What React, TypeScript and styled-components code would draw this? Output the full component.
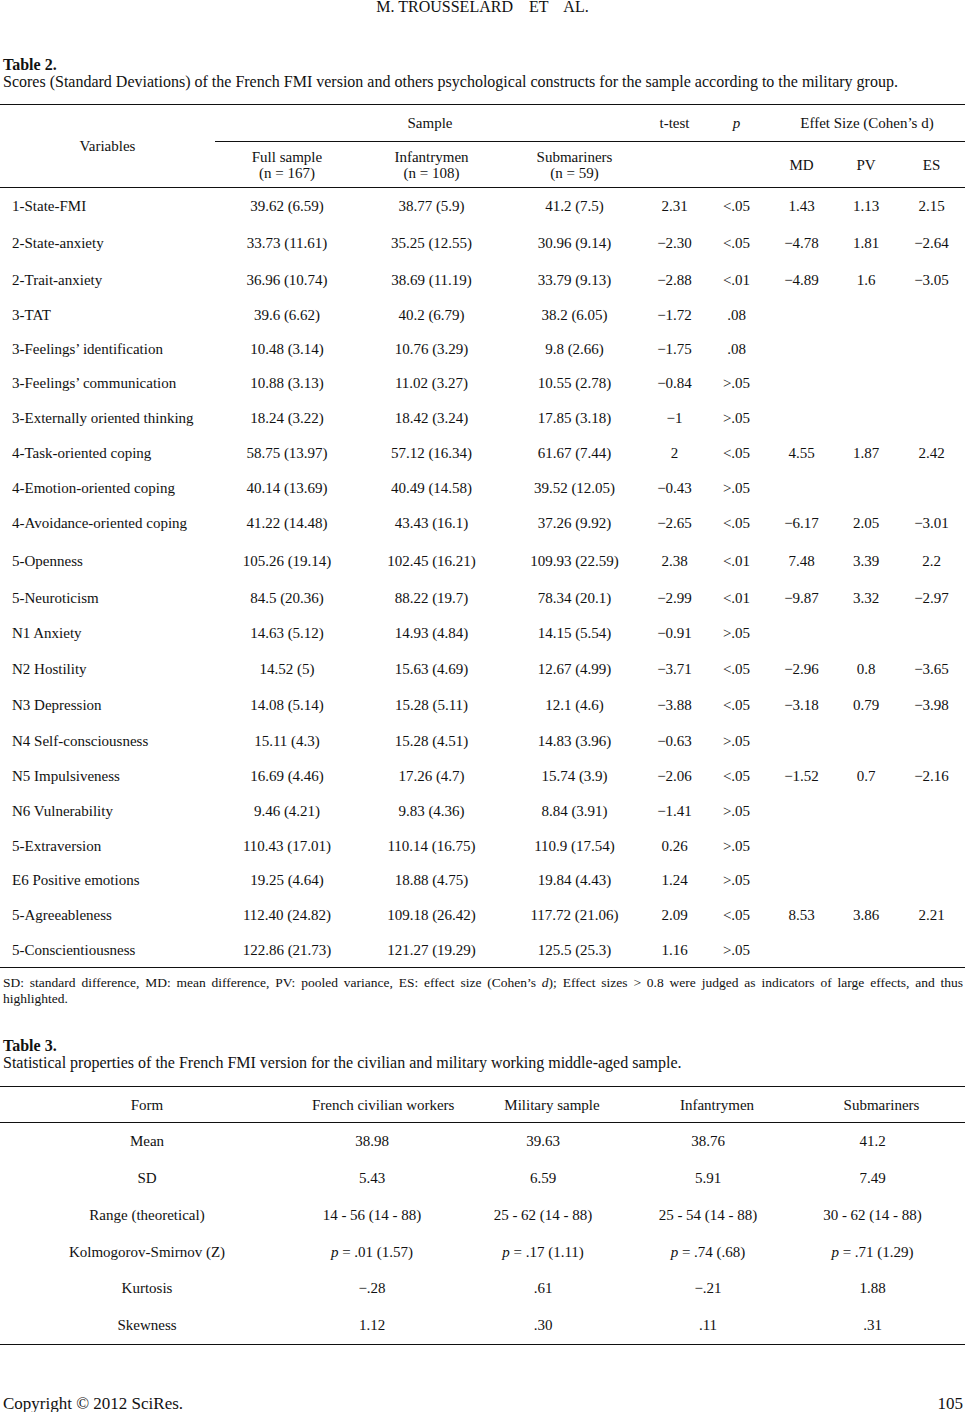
import React from "react";
import styled, { createGlobalStyle } from "styled-components";

const Global = createGlobalStyle`
  html, body { margin: 0; padding: 0; background: #fff; }
  body { font-family: "Liberation Serif", "Times New Roman", serif; color: #111; }
`;

const Page = styled.div`
  width: 965px;
  display: flex;
  flex-direction: column;
`;

const RunningHead = styled.div`
  font-size: 16px;
  line-height: 14px;
  height: 14px;
  text-align: center;
  white-space: pre;
`;

const Caption = styled.div<{ $mt: number }>`
  margin-top: ${(p) => p.$mt}px;
  padding-left: 3px;
  font-size: 16px;
  line-height: 17px;
`;

const CaptionTitle = styled.div`
  font-weight: bold;
`;

const Table = styled.table<{ $mt: number }>`
  margin-top: ${(p) => p.$mt}px;
  width: 965px;
  table-layout: fixed;
  border-collapse: collapse;
  border-top: 1px solid #111;
  border-bottom: 1px solid #111;
  font-size: 15px;
  line-height: 16px;
`;

const Row = styled.tr<{ $h: number; $rule?: boolean }>`
  height: ${(p) => p.$h}px;
  ${(p) => (p.$rule ? "border-bottom: 1px solid #111;" : "")}
`;

const HeadCell = styled.th<{ $rule?: boolean; $shift?: number }>`
  font-weight: normal;
  text-align: center;
  vertical-align: middle;
  white-space: nowrap;
  padding: 0 0 0 ${(p) => p.$shift ?? 0}px;
  ${(p) => (p.$rule ? "border-bottom: 1px solid #111;" : "")}
`;

const Cell = styled.td<{ $left?: boolean }>`
  text-align: ${(p) => (p.$left ? "left" : "center")};
  vertical-align: middle;
  padding: 0 0 0 ${(p) => (p.$left ? 12 : 0)}px;
  white-space: nowrap;
`;

const Footnote = styled.p`
  margin: 7px 0 0;
  padding: 0 2px 0 3px;
  font-size: 13.5px;
  line-height: 16px;
  text-align: justify;
`;

const Footer = styled.div`
  margin-top: 50px;
  padding: 0 2px 0 3px;
  display: flex;
  justify-content: space-between;
  font-size: 17px;
  line-height: 17px;
`;

const M = "\u2212";

type R2 = [string, string, string, string, string, string, string?, string?, string?];

const t2: { h: number; r: R2 }[] = [
  { h: 37, r: ["1-State-FMI", "39.62 (6.59)", "38.77 (5.9)", "41.2 (7.5)", "2.31", "<.05", "1.43", "1.13", "2.15"] },
  { h: 37, r: ["2-State-anxiety", "33.73 (11.61)", "35.25 (12.55)", "30.96 (9.14)", M + "2.30", "<.05", M + "4.78", "1.81", M + "2.64"] },
  { h: 36, r: ["2-Trait-anxiety", "36.96 (10.74)", "38.69 (11.19)", "33.79 (9.13)", M + "2.88", "<.01", M + "4.89", "1.6", M + "3.05"] },
  { h: 34, r: ["3-TAT", "39.6 (6.62)", "40.2 (6.79)", "38.2 (6.05)", M + "1.72", ".08"] },
  { h: 34, r: ["3-Feelings\u2019 identification", "10.48 (3.14)", "10.76 (3.29)", "9.8 (2.66)", M + "1.75", ".08"] },
  { h: 35, r: ["3-Feelings\u2019 communication", "10.88 (3.13)", "11.02 (3.27)", "10.55 (2.78)", M + "0.84", ">.05"] },
  { h: 35, r: ["3-Externally oriented thinking", "18.24 (3.22)", "18.42 (3.24)", "17.85 (3.18)", M + "1", ">.05"] },
  { h: 35, r: ["4-Task-oriented coping", "58.75 (13.97)", "57.12 (16.34)", "61.67 (7.44)", "2", "<.05", "4.55", "1.87", "2.42"] },
  { h: 34, r: ["4-Emotion-oriented coping", "40.14 (13.69)", "40.49 (14.58)", "39.52 (12.05)", M + "0.43", ">.05"] },
  { h: 37, r: ["4-Avoidance-oriented coping", "41.22 (14.48)", "43.43 (16.1)", "37.26 (9.92)", M + "2.65", "<.05", M + "6.17", "2.05", M + "3.01"] },
  { h: 38, r: ["5-Openness", "105.26 (19.14)", "102.45 (16.21)", "109.93 (22.59)", "2.38", "<.01", "7.48", "3.39", "2.2"] },
  { h: 36, r: ["5-Neuroticism", "84.5 (20.36)", "88.22 (19.7)", "78.34 (20.1)", M + "2.99", "<.01", M + "9.87", "3.32", M + "2.97"] },
  { h: 35, r: ["N1 Anxiety", "14.63 (5.12)", "14.93 (4.84)", "14.15 (5.54)", M + "0.91", ">.05"] },
  { h: 36, r: ["N2 Hostility", "14.52 (5)", "15.63 (4.69)", "12.67 (4.99)", M + "3.71", "<.05", M + "2.96", "0.8", M + "3.65"] },
  { h: 36, r: ["N3 Depression", "14.08 (5.14)", "15.28 (5.11)", "12.1 (4.6)", M + "3.88", "<.05", M + "3.18", "0.79", M + "3.98"] },
  { h: 36, r: ["N4 Self-consciousness", "15.11 (4.3)", "15.28 (4.51)", "14.83 (3.96)", M + "0.63", ">.05"] },
  { h: 35, r: ["N5 Impulsiveness", "16.69 (4.46)", "17.26 (4.7)", "15.74 (3.9)", M + "2.06", "<.05", M + "1.52", "0.7", M + "2.16"] },
  { h: 35, r: ["N6 Vulnerability", "9.46 (4.21)", "9.83 (4.36)", "8.84 (3.91)", M + "1.41", ">.05"] },
  { h: 34, r: ["5-Extraversion", "110.43 (17.01)", "110.14 (16.75)", "110.9 (17.54)", "0.26", ">.05"] },
  { h: 35, r: ["E6 Positive emotions", "19.25 (4.64)", "18.88 (4.75)", "19.84 (4.43)", "1.24", ">.05"] },
  { h: 35, r: ["5-Agreeableness", "112.40 (24.82)", "109.18 (26.42)", "117.72 (21.06)", "2.09", "<.05", "8.53", "3.86", "2.21"] },
  { h: 35, r: ["5-Conscientiousness", "122.86 (21.73)", "121.27 (19.29)", "125.5 (25.3)", "1.16", ">.05"] },
];

const t2cols = [215, 144, 145, 141, 59, 65, 65, 64, 67];

const Pv = ({ v }: { v: string }) => (
  <>
    <i>p</i> = {v}
  </>
);

const t3: { h: number; r: React.ReactNode[] }[] = [
  { h: 37, r: ["Mean", "38.98", "39.63", "38.76", "41.2"] },
  { h: 37, r: ["SD", "5.43", "6.59", "5.91", "7.49"] },
  { h: 37, r: ["Range (theoretical)", "14 - 56 (14 - 88)", "25 - 62 (14 - 88)", "25 - 54 (14 - 88)", "30 - 62 (14 - 88)"] },
  {
    h: 36,
    r: [
      "Kolmogorov-Smirnov (Z)",
      <Pv v=".01 (1.57)" />,
      <Pv v=".17 (1.11)" />,
      <Pv v=".74 (.68)" />,
      <Pv v=".71 (1.29)" />,
    ],
  },
  { h: 37, r: ["Kurtosis", M + ".28", ".61", M + ".21", "1.88"] },
  { h: 38, r: ["Skewness", "1.12", ".30", ".11", ".31"] },
];

const t3cols = [294, 156, 186, 144, 185];
const t3head = ["Form", "French civilian workers", "Military sample", "Infantrymen", "Submariners"];

export default function App() {
  return (
    <Page>
      <Global />
      <RunningHead>{"M. TROUSSELARD    ET    AL."}</RunningHead>

      <Caption $mt={42}>
        <CaptionTitle>Table 2.</CaptionTitle>
        <div>
          Scores (Standard Deviations) of the French FMI version and others psychological constructs for the sample
          according to the military group.
        </div>
      </Caption>

      <Table $mt={14}>
        <colgroup>
          {t2cols.map((w, i) => (
            <col key={i} style={{ width: w }} />
          ))}
        </colgroup>
        <thead>
          <Row $h={37}>
            <HeadCell rowSpan={2}>Variables</HeadCell>
            <HeadCell colSpan={3} $rule>
              Sample
            </HeadCell>
            <HeadCell $rule>t-test</HeadCell>
            <HeadCell $rule>
              <i>p</i>
            </HeadCell>
            <HeadCell colSpan={3} $rule>
              Effet Size (Cohen’s d)
            </HeadCell>
          </Row>
          <Row $h={46} $rule>
            <HeadCell>
              Full sample
              <br />
              (n = 167)
            </HeadCell>
            <HeadCell>
              Infantrymen
              <br />
              (n = 108)
            </HeadCell>
            <HeadCell>
              Submariners
              <br />
              (n = 59)
            </HeadCell>
            <HeadCell />
            <HeadCell />
            <HeadCell>MD</HeadCell>
            <HeadCell>PV</HeadCell>
            <HeadCell>ES</HeadCell>
          </Row>
        </thead>
        <tbody>
          {t2.map((row, i) => (
            <Row key={i} $h={row.h}>
              {Array.from({ length: 9 }).map((_, j) => (
                <Cell key={j} $left={j === 0}>
                  {row.r[j] ?? ""}
                </Cell>
              ))}
            </Row>
          ))}
        </tbody>
      </Table>

      <Footnote>
        {"SD: standard difference, MD: mean difference, PV: pooled variance, ES: effect size (Cohen’s "}
        <i>d</i>
        {"); Effect sizes > 0.8 were judged as indicators of large effects, and thus "}
        <span>highlighted.</span>
      </Footnote>

      <Caption $mt={30}>
        <CaptionTitle>Table 3.</CaptionTitle>
        <div>Statistical properties of the French FMI version for the civilian and military working middle-aged sample.</div>
      </Caption>

      <Table $mt={15}>
        <colgroup>
          {t3cols.map((w, i) => (
            <col key={i} style={{ width: w }} />
          ))}
        </colgroup>
        <thead>
          <Row $h={36} $rule>
            {t3head.map((h, i) => (
              <HeadCell key={i} $shift={i === 0 ? 0 : 18}>
                {h}
              </HeadCell>
            ))}
          </Row>
        </thead>
        <tbody>
          {t3.map((row, i) => (
            <Row key={i} $h={row.h}>
              {row.r.map((c, j) => (
                <Cell key={j}>{c}</Cell>
              ))}
            </Row>
          ))}
        </tbody>
      </Table>

      <Footer>
        <span>Copyright © 2012 SciRes.</span>
        <span>105</span>
      </Footer>
    </Page>
  );
}
